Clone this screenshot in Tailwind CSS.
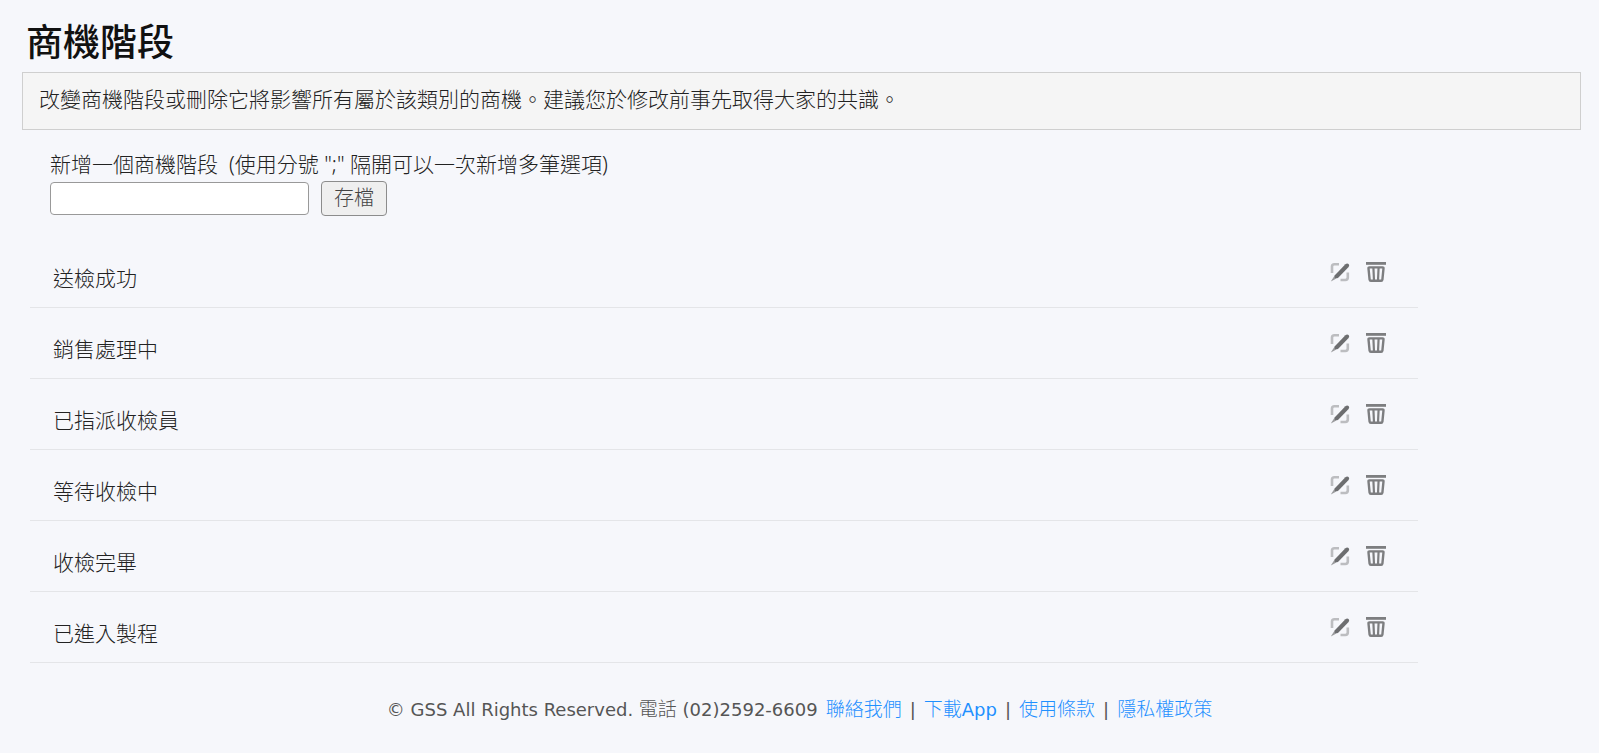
<!DOCTYPE html>
<html lang="zh-Hant">
<head>
  <meta charset="UTF-8">
  <meta name="viewport" content="width=device-width, initial-scale=1.0">
  <title>商機階段</title>
  <script src="https://cdn.jsdelivr.net/npm/@tailwindcss/browser@4"></script>
</head>
<body class="bg-[#f6f7fb] min-h-screen text-[#222] text-[21px] leading-7 font-light font-['Noto_Sans','Noto_Sans_CJK_TC',sans-serif]">
  <!-- icons shared by every row -->
  <svg class="hidden">
    <symbol id="icon-edit" viewBox="0 0 20 20">
      <g fill="none" stroke="#bcbdc0" stroke-width="2.6">
        <path d="M2 11V4.6Q2 2.2 4.4 2.2H9"></path>
        <path d="M17.8 10.5V15.6Q17.8 18 15.4 18H10.5"></path>
      </g>
      <path d="M.8 19.6L4 14.4L6.4 16.6Z" fill="#9a9b9d"></path>
      <path d="M4.6 13.4L15.4 2.2Q17.2 .8 18.6 2Q19.8 3.4 18.6 5L8.2 15.8Q6 16.8 4.8 15.8Q3.8 14.8 4.6 13.4Z" fill="#6d6e70"></path>
    </symbol>
    <symbol id="icon-trash" viewBox="0 0 20 20">
      <path d="M0 1.4H20" stroke="#7d7e80" stroke-width="2.8"></path>
      <path d="M3.4 5.4H16.6Q17.6 5.4 17.5 6.4L16.4 17.6Q16.2 18.8 15.2 18.8H4.8Q3.8 18.8 3.6 17.6L2.5 6.4Q2.4 5.4 3.4 5.4Z" fill="none" stroke="#7d7e80" stroke-width="2.4"></path>
      <path d="M7.4 5.4L8 18.8M12.6 5.4L12 18.8" stroke="#7d7e80" stroke-width="2.2"></path>
    </symbol>
  </svg>

  <main class="pl-[22px] pr-[18px] pt-5">
    <h1 class="pl-1 text-[37px] leading-[44px] font-medium text-[#111]">商機階段</h1>
    <p class="mt-2 px-4 pt-3 pb-4 border border-[#cfcfcf] bg-[#f5f5f5]">改變商機階段或刪除它將影響所有屬於該類別的商機。建議您於修改前事先取得大家的共識。</p>

    <form class="mt-5 pl-7">
      <label for="stages" class="block whitespace-pre">新增一個商機階段  (使用分號 ";" 隔開可以一次新增多筆選項)</label>
      <div class="mt-[3px] flex items-center gap-3">
        <input id="stages" type="text" class="w-[259px] h-[33px] px-2 bg-white border border-[#999] rounded-sm">
        <button type="button" class="h-[35px] px-3 pb-0.5 flex items-center bg-[#efefef] border border-[#8c8c8c] rounded-sm text-xl text-[#444]">存檔</button>
      </div>
    </form>

    <ul class="mt-[21px] ml-2 w-[89%]">
      <li class="h-[71px] pl-[23px] pr-8 flex items-center justify-between border-b border-[#e4e5e8]">
        <span class="pt-3">送檢成功</span>
        <span class="flex gap-4">
          <button type="button" aria-label="編輯送檢成功"><svg class="size-5"><use href="#icon-edit"></use></svg></button>
          <button type="button" aria-label="刪除送檢成功"><svg class="size-5"><use href="#icon-trash"></use></svg></button>
        </span>
      </li>
      <li class="h-[71px] pl-[23px] pr-8 flex items-center justify-between border-b border-[#e4e5e8]">
        <span class="pt-3">銷售處理中</span>
        <span class="flex gap-4">
          <button type="button" aria-label="編輯銷售處理中"><svg class="size-5"><use href="#icon-edit"></use></svg></button>
          <button type="button" aria-label="刪除銷售處理中"><svg class="size-5"><use href="#icon-trash"></use></svg></button>
        </span>
      </li>
      <li class="h-[71px] pl-[23px] pr-8 flex items-center justify-between border-b border-[#e4e5e8]">
        <span class="pt-3">已指派收檢員</span>
        <span class="flex gap-4">
          <button type="button" aria-label="編輯已指派收檢員"><svg class="size-5"><use href="#icon-edit"></use></svg></button>
          <button type="button" aria-label="刪除已指派收檢員"><svg class="size-5"><use href="#icon-trash"></use></svg></button>
        </span>
      </li>
      <li class="h-[71px] pl-[23px] pr-8 flex items-center justify-between border-b border-[#e4e5e8]">
        <span class="pt-3">等待收檢中</span>
        <span class="flex gap-4">
          <button type="button" aria-label="編輯等待收檢中"><svg class="size-5"><use href="#icon-edit"></use></svg></button>
          <button type="button" aria-label="刪除等待收檢中"><svg class="size-5"><use href="#icon-trash"></use></svg></button>
        </span>
      </li>
      <li class="h-[71px] pl-[23px] pr-8 flex items-center justify-between border-b border-[#e4e5e8]">
        <span class="pt-3">收檢完畢</span>
        <span class="flex gap-4">
          <button type="button" aria-label="編輯收檢完畢"><svg class="size-5"><use href="#icon-edit"></use></svg></button>
          <button type="button" aria-label="刪除收檢完畢"><svg class="size-5"><use href="#icon-trash"></use></svg></button>
        </span>
      </li>
      <li class="h-[71px] pl-[23px] pr-8 flex items-center justify-between border-b border-[#e4e5e8]">
        <span class="pt-3">已進入製程</span>
        <span class="flex gap-4">
          <button type="button" aria-label="編輯已進入製程"><svg class="size-5"><use href="#icon-edit"></use></svg></button>
          <button type="button" aria-label="刪除已進入製程"><svg class="size-5"><use href="#icon-trash"></use></svg></button>
        </span>
      </li>
    </ul>
  </main>

  <footer class="mt-8 flex flex-wrap justify-center items-baseline gap-x-2 text-lg leading-7 font-normal text-[#555] font-['DejaVu_Sans','Noto_Sans_CJK_TC',sans-serif]">
    <span>© GSS All Rights Reserved. <span class="text-[19px] font-light">電話</span> (02)2592-6609</span>
    <a href="#" class="text-[19px] font-light text-[#1e90ff]">聯絡我們</a>
    <span>|</span>
    <a href="#" class="text-[#1e90ff]"><span class="text-[19px] font-light">下載</span>App</a>
    <span>|</span>
    <a href="#" class="text-[19px] font-light text-[#1e90ff]">使用條款</a>
    <span>|</span>
    <a href="#" class="text-[19px] font-light text-[#1e90ff]">隱私權政策</a>
  </footer>
</body>
</html>
